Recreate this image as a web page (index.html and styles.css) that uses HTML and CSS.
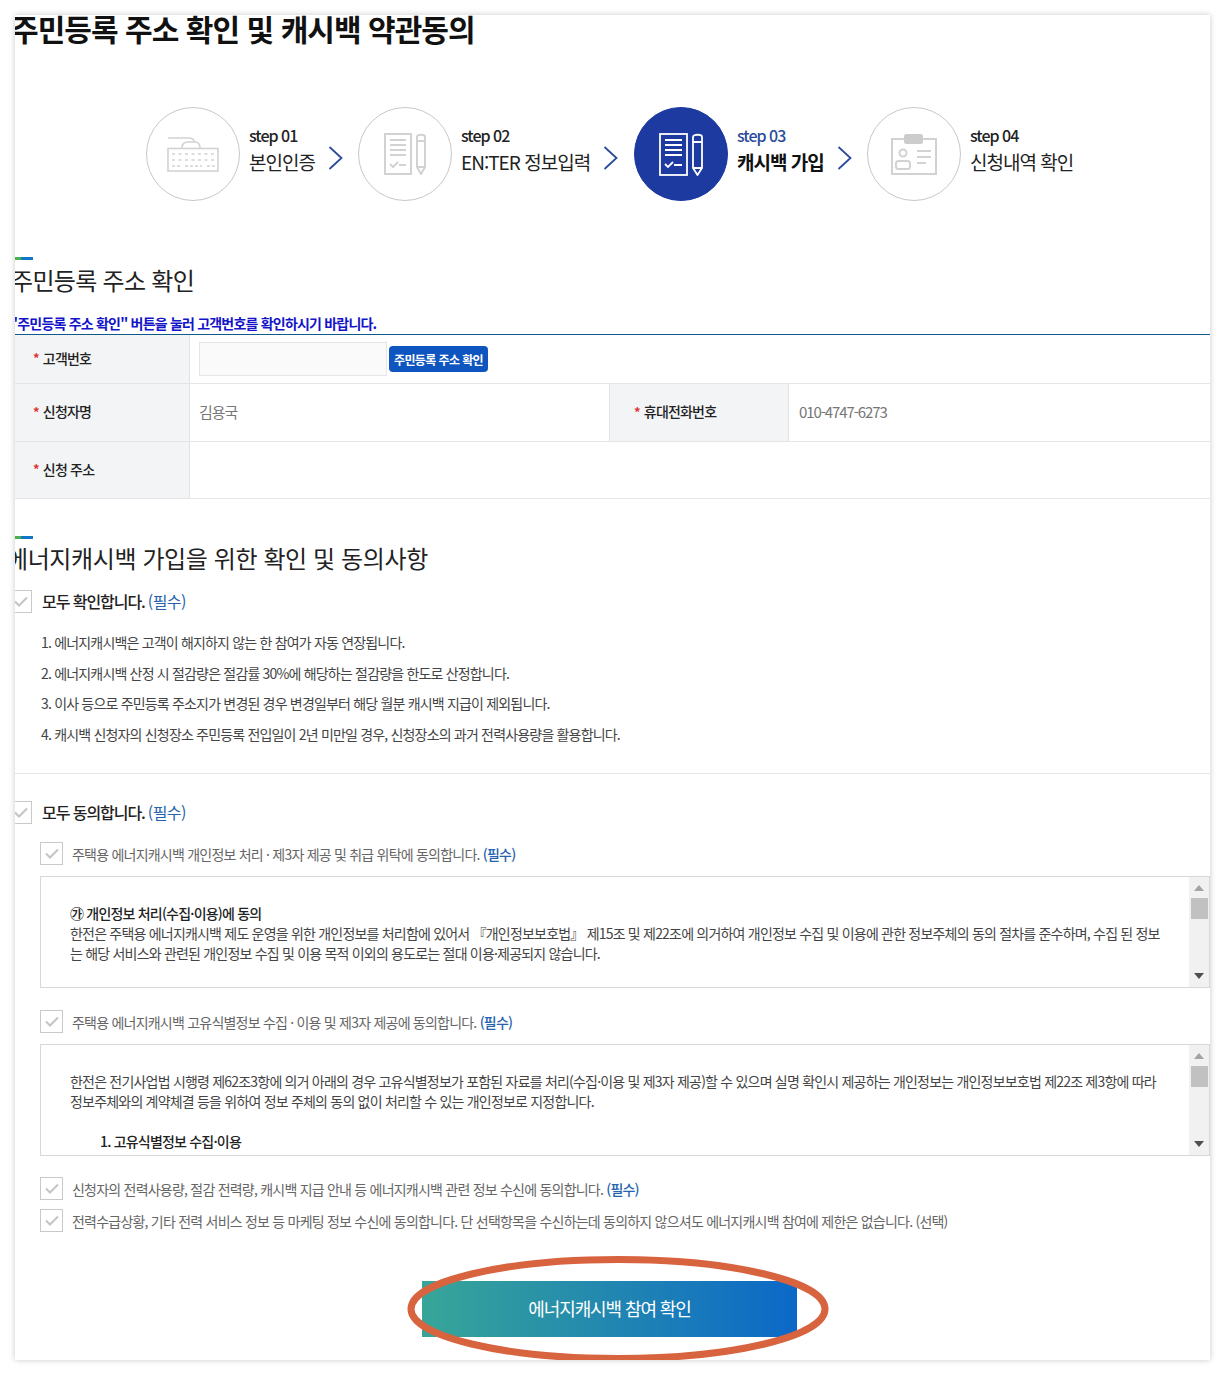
FILE: index.html
```html
<!DOCTYPE html>
<html lang="ko">
<head>
<meta charset="utf-8">
<title>주민등록 주소 확인 및 캐시백 약관동의</title>
<link rel="stylesheet" href="styles.css">
</head>
<body>
<main class="card">
  <h1 class="page-title">주민등록 주소 확인 및 캐시백 약관동의</h1>

  <ol class="steps">
    <li class="step step-1">
      <span class="circle">
        <svg class="ico" width="52" height="35" viewBox="0 0 52 35" fill="none" stroke="#d2d2d2" stroke-width="1.600">
          <path d="M1 1h21c4 0 5 2 6 4M15 11c0-4 2-6 6-6h7c3 0 5 2 5 6"/>
          <rect x="1" y="11.500" width="50" height="22.500"/>
          <path d="M5 17h43M5 23h43" stroke-dasharray="3 3.500"/>
          <path d="M5 29h9M18 29h17M40 29h8" stroke-dasharray="3 2"/>
        </svg>
      </span>
      <span class="label"><b class="no">step 01</b><span class="name">본인인증</span></span>
      <svg class="arrow" width="15" height="24" viewBox="0 0 15 24" fill="none" stroke="#2b4b9b" stroke-width="1.800"><path d="M1.500 1l12 11-12 11"/></svg>
    </li>
    <li class="step step-2">
      <span class="circle">
        <svg class="ico" width="42" height="42" viewBox="0 0 42 42" fill="none" stroke="#d2d2d2" stroke-width="2">
          <rect x="1" y="1" width="26" height="40"/>
          <path d="M6 7h16M6 12h16M6 17h16M6 22h16M15 32h7"/>
          <path d="M6 31l3 3 5-5"/>
          <path d="M33 4c0-3 8-3 8 0v30l-4 7-4-7zM33 8h8M33 34h8"/>
        </svg>
      </span>
      <span class="label"><b class="no">step 02</b><span class="name">EN:TER 정보입력</span></span>
      <svg class="arrow" width="15" height="24" viewBox="0 0 15 24" fill="none" stroke="#2b4b9b" stroke-width="1.800"><path d="M1.500 1l12 11-12 11"/></svg>
    </li>
    <li class="step step-3 is-current">
      <span class="circle">
        <svg class="ico" width="44" height="43" viewBox="0 0 44 43" fill="none" stroke="#fff" stroke-width="1.800">
          <rect x="1" y="1" width="27" height="41"/>
          <path d="M6 7h17M6 12h17M6 17h17M6 22h17M15 32h8"/>
          <path d="M6 31l3 3 5-5"/>
          <path d="M34 4c0-3 9-3 9 0v31l-4.500 7-4.500-7zM34 9h9M34 35h9"/>
        </svg>
      </span>
      <span class="label"><b class="no">step 03</b><span class="name">캐시백 가입</span></span>
      <svg class="arrow" width="15" height="24" viewBox="0 0 15 24" fill="none" stroke="#2b4b9b" stroke-width="1.800"><path d="M1.500 1l12 11-12 11"/></svg>
    </li>
    <li class="step step-4">
      <span class="circle">
        <svg class="ico" width="46" height="41" viewBox="0 0 46 41" fill="none" stroke="#d2d2d2" stroke-width="2">
          <path d="M14 5H1v35h44V5H31"/>
          <rect x="14" y="1" width="17" height="8" rx="1.500" fill="#cccccc" stroke="#cccccc"/>
          <circle cx="12" cy="19" r="3.500"/>
          <rect x="5" y="27" width="14" height="8" rx="2.500"/>
          <path d="M26 17h14M26 23h14M26 29h9"/>
        </svg>
      </span>
      <span class="label"><b class="no">step 04</b><span class="name">신청내역 확인</span></span>
    </li>
  </ol>

  <section class="addr">
    <i class="sec-mark"></i>
    <h2 class="sec-title">주민등록 주소 확인</h2>
    <p class="notice">"주민등록 주소 확인" 버튼을 눌러 고객번호를 확인하시기 바랍니다.</p>
    <div class="form-table">
      <div class="row row-a">
        <div class="th"><em>*</em>고객번호</div>
        <div class="td td-input"><span class="fake-input"></span><button class="btn-small" type="button">주민등록 주소 확인</button></div>
      </div>
      <div class="row row-b">
        <div class="th"><em>*</em>신청자명</div>
        <div class="td td-name">김용국</div>
        <div class="th th-tel"><em>*</em>휴대전화번호</div>
        <div class="td td-tel">010-4747-6273</div>
      </div>
      <div class="row row-c">
        <div class="th"><em>*</em>신청 주소</div>
        <div class="td"></div>
      </div>
    </div>
  </section>

  <section class="consent">
    <i class="sec-mark"></i>
    <h2 class="sec-title">에너지캐시백 가입을 위한 확인 및 동의사항</h2>
    <label class="check-all first"><span class="box big"><svg width="14" height="11" viewBox="0 0 14 11" fill="none" stroke="#c4c4c4" stroke-width="2"><path d="M1 5.500l4 4L13 1.500"/></svg></span><strong>모두 확인합니다.</strong> <span class="req">(필수)</span></label>
    <ul class="terms">
      <li>1. 에너지캐시백은 고객이 해지하지 않는 한 참여가 자동 연장됩니다.</li>
      <li>2. 에너지캐시백 산정 시 절감량은 절감률 30%에 해당하는 절감량을 한도로 산정합니다.</li>
      <li>3. 이사 등으로 주민등록 주소지가 변경된 경우 변경일부터 해당 월분 캐시백 지급이 제외됩니다.</li>
      <li>4. 캐시백 신청자의 신청장소 주민등록 전입일이 2년 미만일 경우, 신청장소의 과거 전력사용량을 활용합니다.</li>
    </ul>
    <label class="check-all second"><span class="box big"><svg width="14" height="11" viewBox="0 0 14 11" fill="none" stroke="#c4c4c4" stroke-width="2"><path d="M1 5.500l4 4L13 1.500"/></svg></span><strong>모두 동의합니다.</strong> <span class="req">(필수)</span></label>

    <label class="check c1"><span class="box"><svg width="14" height="11" viewBox="0 0 14 11" fill="none" stroke="#c4c4c4" stroke-width="2"><path d="M1 5.500l4 4L13 1.500"/></svg></span><span>주택용 에너지캐시백 개인정보 처리 · 제3자 제공 및 취급 위탁에 동의합니다. <span class="req">(필수)</span></span></label>
    <div class="scrollbox sb-1">
      <div class="scroll-body">
        <p><b>㉮ 개인정보 처리(수집·이용)에 동의</b><br>한전은 주택용 에너지캐시백 제도 운영을 위한 개인정보를 처리함에 있어서 『개인정보보호법』 제15조 및 제22조에 의거하여 개인정보 수집 및 이용에 관한 정보주체의 동의 절차를 준수하며, 수집 된 정보는 해당 서비스와 관련된 개인정보 수집 및 이용 목적 이외의 용도로는 절대 이용·제공되지 않습니다.</p>
        <p class="sb-next"><b>1. 개인정보 수집·이용 목적</b></p>
      </div>
      <div class="sbar"><i class="up"></i><i class="thumb"></i><i class="down"></i></div>
    </div>

    <label class="check c2"><span class="box"><svg width="14" height="11" viewBox="0 0 14 11" fill="none" stroke="#c4c4c4" stroke-width="2"><path d="M1 5.500l4 4L13 1.500"/></svg></span><span>주택용 에너지캐시백 고유식별정보 수집 · 이용 및 제3자 제공에 동의합니다. <span class="req">(필수)</span></span></label>
    <div class="scrollbox sb-2">
      <div class="scroll-body">
        <p>한전은 전기사업법 시행령 제62조3항에 의거 아래의 경우 고유식별정보가 포함된 자료를 처리(수집·이용 및 제3자 제공)할 수 있으며 실명 확인시 제공하는 개인정보는 개인정보보호법 제22조 제3항에 따라 정보주체와의 계약체결 등을 위하여 정보 주체의 동의 없이 처리할 수 있는 개인정보로 지정합니다.</p>
        <p class="sb-next"><b>1. 고유식별정보 수집·이용</b></p>
      </div>
      <div class="sbar"><i class="up"></i><i class="thumb"></i><i class="down"></i></div>
    </div>

    <label class="check c3"><span class="box"><svg width="14" height="11" viewBox="0 0 14 11" fill="none" stroke="#c4c4c4" stroke-width="2"><path d="M1 5.500l4 4L13 1.500"/></svg></span><span>신청자의 전력사용량, 절감 전력량, 캐시백 지급 안내 등 에너지캐시백 관련 정보 수신에 동의합니다. <span class="req">(필수)</span></span></label>
    <label class="check c4"><span class="box"><svg width="14" height="11" viewBox="0 0 14 11" fill="none" stroke="#c4c4c4" stroke-width="2"><path d="M1 5.500l4 4L13 1.500"/></svg></span><span>전력수급상황, 기타 전력 서비스 정보 등 마케팅 정보 수신에 동의합니다. 단 선택항목을 수신하는데 동의하지 않으셔도 에너지캐시백 참여에 제한은 없습니다. (선택)</span></label>
  </section>

  <div class="submit-wrap">
    <button class="btn-submit" type="button">에너지캐시백 참여 확인</button>
    <svg class="ring" width="426" height="108" viewBox="0 0 426 108" fill="none"><ellipse cx="213" cy="54" rx="207" ry="49.500" stroke="#d8633f" stroke-width="7"/></svg>
  </div>
</main>
</body>
</html>
```
FILE: styles.css
```css
* { box-sizing: border-box; }
html, body { margin: 0; padding: 0; background: #fff; }
body {
  width: 1225px;
  height: 1375px;
  overflow: hidden;
  padding: 15px;
  font-family: "Noto Sans CJK KR", "Noto Sans", sans-serif;
  color: #333;
}
.card {
  width: 1195px;
  height: 1345px;
  background: #fff;
  box-shadow: 0 0 6px rgba(0,0,0,.22);
  position: relative;
  overflow: hidden;
}
.page-title {
  margin: -2px 0 0 -4px;
  font-size: 30px;
  line-height: 30px;
  font-weight: 700;
  letter-spacing: -0.95px;
  color: #111;
  white-space: nowrap;
}
.steps {
  list-style: none;
  margin: 64px 0 0 131px;
  padding: 0;
  display: flex;
  align-items: center;
  height: 94px;
}
.step { display: flex; align-items: center; }
.circle {
  width: 94px;
  height: 94px;
  flex: none;
  border-radius: 50%;
  border: 1px solid #c8c8c8;
  display: flex;
  align-items: center;
  justify-content: center;
  background: #fff;
}
.is-current .circle { background: #1c3aa0; border-color: #1c3aa0; }
.label { display: flex; flex-direction: column; margin-left: 9px; margin-top: -8px; }
.no {
  font-size: 16px;
  line-height: 22px;
  font-weight: 500;
  color: #222;
  letter-spacing: -1px;
}
.is-current .no { color: #2b4b9b; }
.name {
  font-size: 19px;
  line-height: 28px;
  margin-top: 2px;
  color: #222;
  letter-spacing: -1px;
  white-space: nowrap;
}
.is-current .name { font-weight: 700; color: #111; }
.arrow { flex: none; margin-left: 13px; margin-top: 8px; }
.step-1 { width: 212px; }
.step-2 { width: 276px; }
.step-3 { width: 233px; }

.sec-mark {
  display: block;
  width: 18px;
  height: 3px;
  background: linear-gradient(90deg, #4cb050 0 33%, #1276c8 33% 100%);
}
.sec-title {
  font-size: 24px;
  line-height: 34px;
  font-weight: 400;
  color: #222;
  letter-spacing: -0.7px;
  white-space: nowrap;
}
.addr { margin-top: 56px; }
.addr .sec-title { margin: 3px 0 0 -4px; }
.consent .sec-title { margin: 2px 0 0 -9px; letter-spacing: -0.4px; }
.notice {
  margin: 15px 0 0 -5px;
  font-size: 14px;
  line-height: 22px;
  font-weight: 700;
  letter-spacing: -0.8px;
  color: #1414c8;
  white-space: nowrap;
}
.form-table { border-top: 1px solid #0e5a8a; }
.row { display: flex; border-bottom: 1px solid #e3e5e8; }
.row-a { height: 49px; }
.row-b { height: 58px; }
.row-c { height: 57px; }
.th {
  width: 175px;
  flex: none;
  background: #f2f4f6;
  border-right: 1px solid #e0e2e5;
  padding-left: 18px;
  display: flex;
  align-items: center;
  font-size: 14px;
  font-weight: 500;
  color: #222;
  letter-spacing: -0.8px;
  padding-bottom: 3px;
}
.th em { font-style: normal; color: #d33; margin-right: 4px; font-weight: 700; font-size: 13px; }
.th-tel { width: 180px; border-left: 1px solid #e0e2e5; padding-left: 24px; }
.td {
  flex: 1;
  padding-left: 9px;
  display: flex;
  align-items: center;
  font-size: 15px;
  color: #777;
  letter-spacing: -1.1px;
  padding-bottom: 3px;
}
.td-name { flex: 0 0 419px; }
.td-tel { padding-left: 10px; }
.td-input { gap: 2px; padding-bottom: 0; align-items: flex-start; padding-top: 7px; }
.fake-input {
  width: 188px;
  height: 34px;
  background: #fafafa;
  border: 1px solid #e6e6e6;
}
.btn-small {
  width: 99px;
  height: 26px;
  margin-top: 4px;
  background: #0f55c0;
  border: 0;
  border-radius: 4px;
  color: #fff;
  font: 700 12px "Noto Sans CJK KR", sans-serif;
  letter-spacing: -0.6px;
  padding: 0;
}
.consent { margin-top: 37px; }
.check-all {
  display: flex;
  align-items: center;
  font-size: 16px;
  letter-spacing: -0.6px;
  color: #222;
}
.check-all strong { font-weight: 500; margin-right: 3px; letter-spacing: -1.05px; }
.check-all.first { margin-top: 15px; height: 22px; }
.box {
  flex: none;
  display: flex;
  align-items: center;
  justify-content: center;
  border: 1px solid #c9c9c9;
  background: #fff;
  width: 23px;
  height: 23px;
}
.box.big { margin-left: -5px; width: 22px; height: 23px; margin-right: 10px; }
.req { color: #2563ae; font-weight: 500; }
.check-all .req { font-weight: 400; }
.terms {
  list-style: none;
  margin: 15px 0 0 26px;
  padding: 0 0 24px;
}
.terms li {
  font-size: 14px;
  line-height: 30.600px;
  letter-spacing: -0.82px;
  color: #444;
  white-space: nowrap;
}
.check-all.second {
  border-top: 1px solid #e3e5e8;
  padding-top: 27px;
  height: 50px;
}
.check {
  display: flex;
  align-items: center;
  gap: 9px;
  margin-left: 25px;
  font-size: 14px;
  letter-spacing: -0.78px;
  color: #666;
  white-space: nowrap;
  height: 23px;
}
.check.c1 { margin-top: 19px; }
.check.c2 { margin-top: 22px; }
.check.c3 { margin-top: 21px; }
.check.c4 { margin-top: 9px; }
.scrollbox {
  margin: 11px 0 0 25px;
  height: 112px;
  border: 1px solid #d8d8d8;
  display: flex;
  overflow: hidden;
}
.scroll-body {
  flex: 1;
  padding: 26px 25px 0 29px;
  font-size: 14px;
  line-height: 20px;
  letter-spacing: -0.8px;
  color: #444;
  overflow: hidden;
}
.scroll-body p { margin: 0; }
.scroll-body b { font-weight: 500; color: #222; }
.scroll-body .sb-next { margin-top: 20px; padding-left: 30px; }
.sbar {
  width: 20px;
  flex: none;
  background: #f1f1f1;
  position: relative;
}
.sbar .up, .sbar .down {
  position: absolute;
  left: 5px;
  width: 0;
  height: 0;
  border-left: 5px solid transparent;
  border-right: 5px solid transparent;
}
.sbar .up { top: 8px; border-bottom: 6px solid #a3a3a3; }
.sbar .down { bottom: 8px; border-top: 6px solid #505050; }
.sbar .thumb {
  position: absolute;
  left: 2px;
  top: 21px;
  width: 17px;
  height: 21px;
  background: #c1c1c1;
}
.submit-wrap {
  position: relative;
  display: flex;
  justify-content: center;
  padding-right: 6px;
  margin-top: 49px;
}
.btn-submit {
  width: 375px;
  height: 56px;
  border: 0;
  background: linear-gradient(90deg, #37a698 0%, #0c68c8 100%);
  color: #fff;
  font: 400 18px "Noto Sans CJK KR", sans-serif;
  letter-spacing: -1.1px;
  padding: 0 0 2px;
}
.ring {
  position: absolute;
  left: 390px;
  top: -26px;
  pointer-events: none;
}
```
